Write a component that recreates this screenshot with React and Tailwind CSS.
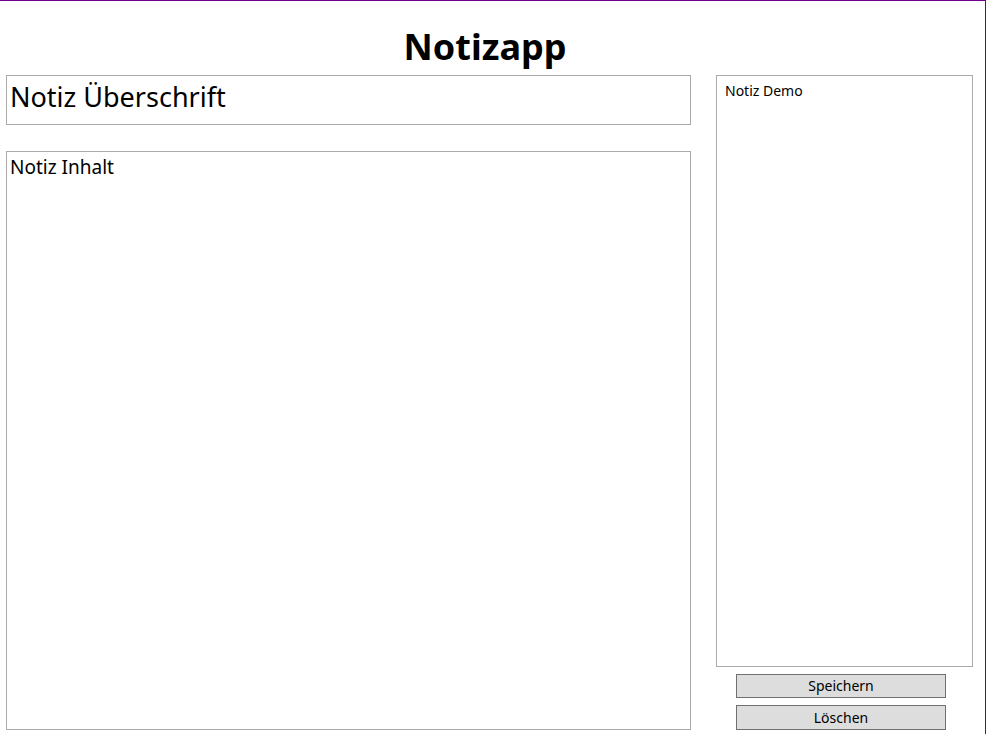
export default function App() {
  return (
    <div className="w-[986px] h-[734px] bg-white border-t border-r border-[#71008b] flex flex-col overflow-hidden text-black font-['Noto_Sans',sans-serif]">
      {/* Title */}
      <h1 className="h-[74px] pt-[24px] pr-[15px] text-center text-[36px] leading-[44px] font-bold">Notizapp</h1>

      <div className="flex pl-[6px] gap-[25px]">
        {/* Editor column */}
        <div className="w-[685px] flex flex-col gap-[26px]">
          <div className="h-[50px] border border-[#ababab] pl-[3px] pt-[5px] text-[27px] leading-[32px]">
            Notiz Überschrift
          </div>
          <div className="h-[579px] border border-[#ababab] pl-[3px] pt-[3px] text-[19px] leading-[24px]">
            Notiz Inhalt
          </div>
        </div>

        {/* Notes list + actions */}
        <div className="w-[257px] flex flex-col">
          <div className="h-[592px] border border-[#ababab] pl-[8px] pt-[5px] text-[14px] leading-[20px]">
            Notiz Demo
          </div>
          <div className="flex flex-col gap-[7px] pt-[7px] pl-[20px]">
            <button className="w-[210px] h-[24px] bg-[#dddddd] border border-[#707070] text-[14px] leading-none flex items-center justify-center">
              Speichern
            </button>
            <button className="w-[210px] h-[25px] bg-[#dddddd] border border-[#707070] text-[14px] leading-none flex items-center justify-center">
              Löschen
            </button>
          </div>
        </div>
      </div>
    </div>
  );
}
